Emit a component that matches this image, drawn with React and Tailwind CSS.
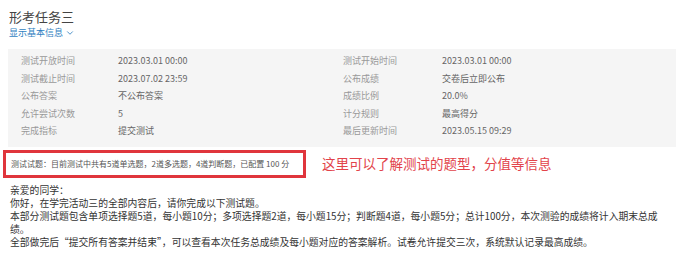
import { ChevronDown } from 'lucide-react';

const font = { fontFamily: '"Noto Sans CJK SC", "Liberation Sans", sans-serif' };

const rows = [
  ['测试开放时间', '2023.03.01 00:00', '测试开始时间', '2023.03.01 00:00'],
  ['测试截止时间', '2023.07.02 23:59', '公布成绩', '交卷后立即公布'],
  ['公布答案', '不公布答案', '成绩比例', '20.0%'],
  ['允许尝试次数', '5', '计分规则', '最高得分'],
  ['完成指标', '提交测试', '最后更新时间', '2023.05.15 09:29'],
];

export default function App() {
  return (
    <div className="h-[268px] w-[681px] overflow-hidden bg-white" style={font}>
      <div className="pl-[9px] pt-[9px]">
        <h1 className="text-[13px] leading-[16px] text-[#444]">形考任务三</h1>
        <button className="mt-[2px] flex items-center gap-[2px] text-[9px] leading-[12px] text-[#2f7fc1]">
          显示基本信息
          <ChevronDown size={10} strokeWidth={2} />
        </button>
      </div>

      <div className="ml-[8px] mr-[5px] mt-[10px] bg-[#f5f5f5] pb-[7px] pt-[3px]">
        {rows.map(([l1, v1, l2, v2]) => (
          <div key={l1} className="flex h-[17.5px] items-center text-[9px] text-[#999]">
            <span className="w-[110px] shrink-0 pl-[13px]">{l1}</span>
            <span className="w-[225px] shrink-0 text-[#666]">{v1}</span>
            <span className="w-[99px] shrink-0">{l2}</span>
            <span className="text-[#666]">{v2}</span>
          </div>
        ))}
      </div>

      <div className="mt-[3px] flex items-center">
        <div className="ml-[3px] flex h-[28px] w-[303px] items-center whitespace-nowrap border-[3px] border-[#e0353c] pl-[5px] text-[8px] text-[#555]">
          测试试题：目前测试中共有5道单选题，2道多选题，4道判断题，已配置 100 分
        </div>
        <div className="ml-[16px] text-[13.5px] text-[#e2434a]">这里可以了解测试的题型，分值等信息</div>
      </div>

      <div className="mt-[6px] pl-[10px] pr-[9px] text-[9.8px] leading-[13px] text-[#333]">
        <p>亲爱的同学：</p>
        <p>你好，在学完活动三的全部内容后，请你完成以下测试题。</p>
        <p>本部分测试题包含单项选择题5道，每小题10分；多项选择题2道，每小题15分；判断题4道，每小题5分；总计100分，本次测验的成绩将计入期末总成绩。</p>
        <p>全部做完后“提交所有答案并结束”，可以查看本次任务总成绩及每小题对应的答案解析。试卷允许提交三次，系统默认记录最高成绩。</p>
      </div>
    </div>
  );
}
